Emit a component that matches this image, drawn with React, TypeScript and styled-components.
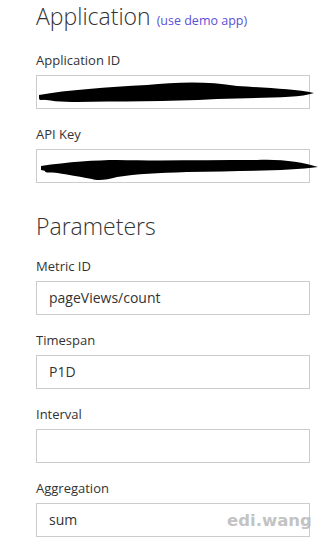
import React from 'react';
import styled, { createGlobalStyle } from 'styled-components';

const GlobalStyle = createGlobalStyle`
  * {
    margin: 0;
    padding: 0;
    box-sizing: border-box;
  }

  body {
    font-family: 'Segoe UI', 'Open Sans', 'Noto Sans', sans-serif;
    background: #ffffff;
    color: #333333;
    -webkit-font-smoothing: antialiased;
  }
`;

const App: React.FC = () => {
  return (
    <>
      <GlobalStyle />
      <Page>
        <Heading>
          Application <DemoLink href="#">(use demo app)</DemoLink>
        </Heading>

        <Field>
          <Label>Application ID</Label>
          <InputBox>
            <Redaction viewBox="0 0 280 34">
              <path d="M2,19 C30,14 70,11 110,9 C140,6 170,5 200,10 C230,12 258,13 277,17 C260,23 220,21 180,23 C130,26 80,25 40,26 C25,26 10,25 2,22 Z" />
              <path d="M4,22 C60,18 120,16 180,16" stroke="#000" strokeWidth="4" fill="none" strokeLinecap="round" />
            </Redaction>
          </InputBox>
        </Field>

        <Field>
          <Label>API Key</Label>
          <InputBox>
            <Redaction viewBox="0 0 280 34">
              <path d="M4,16 C30,12 60,10 80,10 C120,11 170,10 220,10 C245,9 265,12 281,17 C250,21 200,21 150,22 C120,23 100,24 80,27 C70,30 60,31 55,29 C40,26 20,23 4,20 Z" />
              <path d="M10,20 C40,19 70,21 100,19" stroke="#000" strokeWidth="5" fill="none" strokeLinecap="round" />
            </Redaction>
          </InputBox>
        </Field>

        <Heading $spaced>Parameters</Heading>

        <Field>
          <Label>Metric ID</Label>
          <InputBox>pageViews/count</InputBox>
        </Field>

        <Field>
          <Label>Timespan</Label>
          <InputBox>P1D</InputBox>
        </Field>

        <Field>
          <Label>Interval</Label>
          <InputBox />
        </Field>

        <Field>
          <Label>Aggregation</Label>
          <InputBox>sum</InputBox>
        </Field>

        <Watermark>edi.wang</Watermark>
      </Page>
    </>
  );
};

const Page = styled.div`
  position: relative;
  width: 330px;
  height: 551px;
  padding: 2px 20px 0 36px;
  overflow: hidden;
`;

const Heading = styled.h2<{ $spaced?: boolean }>`
  font-size: 23px;
  font-weight: 300;
  line-height: 28px;
  color: #333333;
  margin-top: ${({ $spaced }) => ($spaced ? '29px' : '0')};
  margin-bottom: ${({ $spaced }) => ($spaced ? '1px' : '0')};
  white-space: nowrap;
`;

const DemoLink = styled.a`
  font-size: 12.5px;
  font-weight: 400;
  color: #5b4fd6;
  text-decoration: none;
`;

const Field = styled.div`
  display: flex;
  flex-direction: column;
  padding-top: 15px;
`;

const Label = styled.label`
  font-size: 13px;
  line-height: 20px;
  color: #333333;
  margin-bottom: 5px;
`;

const InputBox = styled.div`
  position: relative;
  width: 274px;
  height: 34px;
  border: 1px solid #cccccc;
  padding: 0 12px;
  font-size: 14px;
  line-height: 32px;
  color: #333333;
`;

const Redaction = styled.svg`
  position: absolute;
  left: 0;
  top: 0;
  width: 280px;
  height: 34px;
  overflow: visible;
  fill: #000000;
`;

const Watermark = styled.div`
  position: absolute;
  left: 227px;
  top: 511px;
  font-family: 'DejaVu Sans', sans-serif;
  font-size: 16.5px;
  font-weight: 700;
  color: #bdbdbd;
  opacity: 0.9;
`;

export default App;
